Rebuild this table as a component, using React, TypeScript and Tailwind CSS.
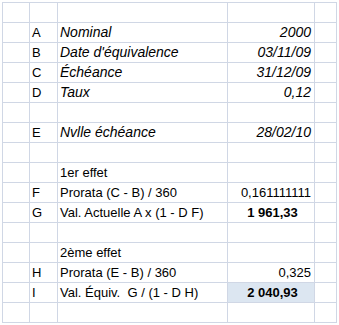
import React from 'react';

type Row = {
  key?: string;
  label?: string;
  value?: string;
  italic?: boolean;
  align?: 'right' | 'center';
  bold?: boolean;
  highlight?: boolean;
};

const rows: Row[] = [
  {},
  { key: 'A', label: 'Nominal', value: '2000', italic: true },
  { key: 'B', label: "Date d'équivalence", value: '03/11/09', italic: true },
  { key: 'C', label: 'Échéance', value: '31/12/09', italic: true },
  { key: 'D', label: 'Taux', value: '0,12', italic: true },
  {},
  { key: 'E', label: 'Nvlle échéance', value: '28/02/10', italic: true },
  {},
  { label: '1er effet' },
  { key: 'F', label: 'Prorata (C - B) / 360', value: '0,161111111' },
  { key: 'G', label: 'Val. Actuelle A x (1 - D F)', value: '1 961,33', align: 'center', bold: true },
  {},
  { label: '2ème effet' },
  { key: 'H', label: 'Prorata (E - B) / 360', value: '0,325' },
  { key: 'I', label: 'Val. Équiv.  G / (1 - D H)', value: '2 040,93', align: 'center', bold: true, highlight: true },
  {},
];

const cell = 'h-[20px] border-r border-b border-[#d0d7e5] leading-[19px] whitespace-pre overflow-visible';

export default function App() {
  return (
    <div className="w-[339px] h-[325px] bg-white pl-[2px] pt-[2px] text-black" style={{ fontFamily: '"Liberation Sans", Arial, sans-serif' }}>
      <div className="grid grid-cols-[27px_28px_170px_87px_22px] border-l border-t border-[#d0d7e5] w-[335px] text-[13px]">
        {rows.map((r, i) => (
          <React.Fragment key={i}>
            <div className={cell}></div>
            <div className={`${cell} pl-[2px]`}>{r.key}</div>
            <div className={`${cell} pl-[2px] ${r.italic ? 'italic text-[14px]' : ''}`}>{r.label}</div>
            <div
              className={`${cell} ${r.align === 'center' ? 'text-center pl-[3px]' : 'text-right pr-[3px]'} ${r.italic ? 'italic text-[14px]' : ''} ${r.bold ? 'font-bold' : ''} ${r.highlight ? 'bg-[#dce6f1]' : ''}`}
            >
              {r.value}
            </div>
            <div className={cell}></div>
          </React.Fragment>
        ))}
      </div>
    </div>
  );
}
